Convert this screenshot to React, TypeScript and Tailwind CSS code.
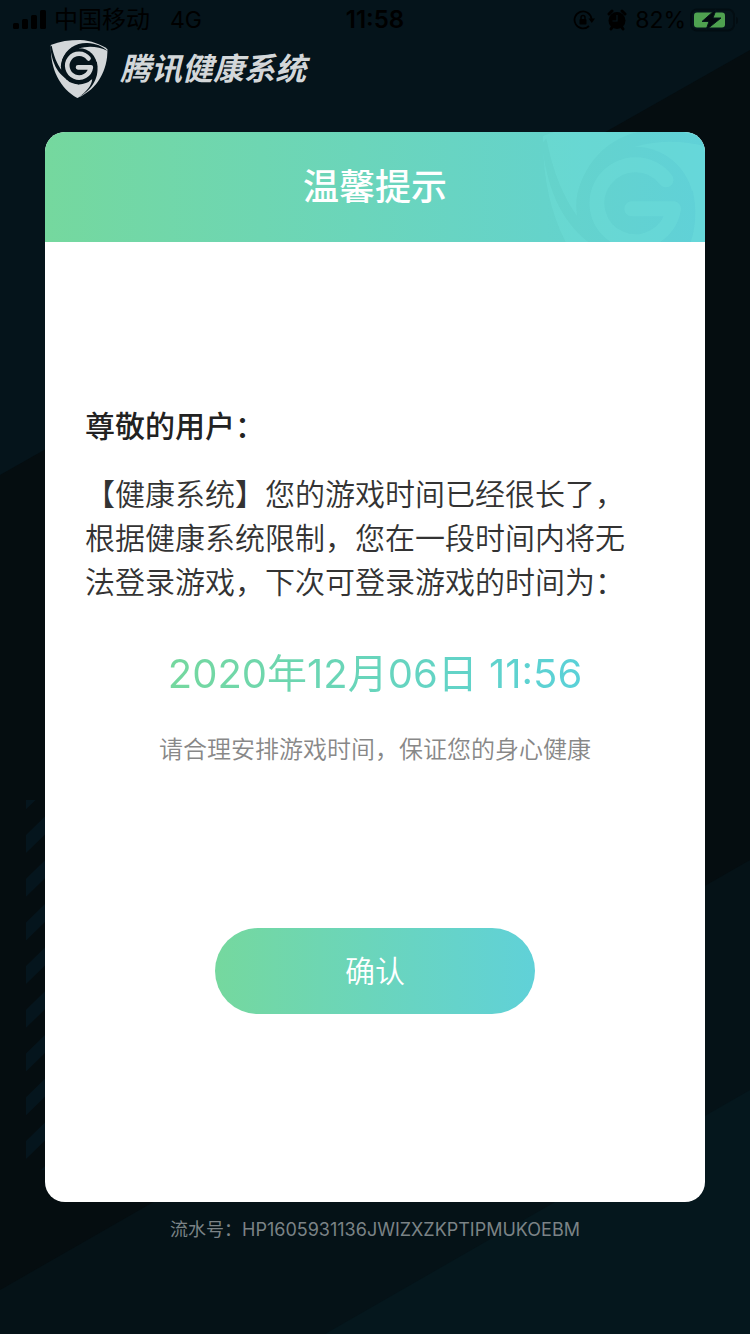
import { useId } from 'react';

const notice = {
    title: '温馨提示',
    greeting: '尊敬的用户：',
    message: '【健康系统】您的游戏时间已经很长了，根据健康系统限制，您在一段时间内将无法登录游戏，下次可登录游戏的时间为：',
    nextLogin: '2020年12月06日 11:56',
    hint: '请合理安排游戏时间，保证您的身心健康',
    serial: 'HP1605931136JWIZXZKPTIPMUKOEBM',
};

const stripes = [-1, 0, 1, 2, 3, 4, 5, 6, 7, 8];

const ShieldLogo = ({ className }: { className?: string }) => {
    const id = useId();

    return (
        <svg viewBox="0 0 174 176" className={className} aria-hidden="true">
            <mask id={id}>
                <path d="M1 15C28 4 58 0 90 0c34 2 62 12 84 28-1 62-28 120-92 148C28 146 0 88 1 15Z" fill="#fff" />
                <g fill="#000">
                    <circle cx="87" cy="80" r="55" />
                    <path d="M36 60C48 26 78 8 112 9c26 1 46 10 62 24-28-14-58-16-87-8v55Z" />
                    <path d="M0 22c6 58 30 98 87 113V80L33 90C20 72 10 48 4 17Z" />
                    <path d="M141 66c10 46-12 84-57 109 26-18 42-38 43-56L87 80Z" />
                </g>
                <path d="M116 56A36 36 0 1 0 123 83H84" fill="none" stroke="#fff" strokeWidth="14" strokeLinecap="round" strokeLinejoin="round" />
            </mask>
            <rect width="174" height="176" fill="currentColor" mask={`url(#${id})`} />
        </svg>
    );
};

const Backdrop = () => (
    <svg viewBox="0 0 750 1334" preserveAspectRatio="none" className="absolute inset-0 -z-10 h-full w-full" aria-hidden="true">
        <defs>
            <clipPath id="band">
                <rect x="26" y="800" width="40" height="370" />
            </clipPath>
        </defs>
        <path d="M0 0H750V50L0 475Z" fill="#05141b" />
        <path d="M750 860V1334H0V1290Z" fill="#051217" />
        <path d="M750 1090V1334H325Z" fill="#05171d" />
        <g clipPath="url(#band)" fill="#05151d">
            {stripes.map((n) => (
                <path key={n} d="M26 835l40-39v18l-40 39Z" transform={`translate(0 ${n * 43.7})`} />
            ))}
        </g>
    </svg>
);

const StatusBar = () => (
    <div className="flex h-10 items-center justify-between px-3 text-[23px] leading-10 text-black">
        <div className="flex flex-1 items-center">
            <svg viewBox="0 0 34 20" className="mr-2 h-5 w-[34px]" fill="currentColor" aria-hidden="true">
                <rect x="1" y="13" width="6" height="6" rx="1.5" />
                <rect x="10" y="9" width="6" height="10" rx="1.5" />
                <rect x="19" y="5" width="6" height="14" rx="1.5" />
                <rect x="28" y="0" width="6" height="19" rx="1.5" />
            </svg>
            <span className="text-2xl leading-10">中国移动</span>
            <span className="ml-5">4G</span>
        </div>
        <span className="text-2xl leading-10 font-semibold">11:58</span>
        <div className="flex flex-1 items-center justify-end">
            <svg viewBox="0 0 22 20" className="mr-3 h-5 w-[22px]" aria-hidden="true">
                <path d="M18.5 9A8.5 8.5 0 1 0 16 16" fill="none" stroke="currentColor" strokeWidth="1.8" />
                <path d="M15.5 8.5H22L18.8 13Z" fill="currentColor" />
                <rect x="6.5" y="9" width="7" height="5.5" rx="1" fill="currentColor" />
                <path d="M8 9V7.5a2 2 0 0 1 4 0V9" fill="none" stroke="currentColor" strokeWidth="1.5" />
            </svg>
            <svg viewBox="0 0 20 22" className="mr-2 h-[22px] w-5" aria-hidden="true">
                <path d="M2 5 5 2M18 5l-3-3M4 20l2-3M16 20l-2-3" stroke="currentColor" strokeWidth="3" strokeLinecap="round" />
                <circle cx="10" cy="11.5" r="8.5" fill="currentColor" />
                <path d="M10 6v6H5.5" fill="none" stroke="#05141c" strokeWidth="1.2" />
            </svg>
            <span>82%</span>
            <svg viewBox="0 0 48 24" className="ml-1 h-6 w-12" aria-hidden="true">
                <rect x="1" y="1.5" width="43" height="21" rx="6" fill="none" stroke="#030d12" strokeWidth="2" />
                <path d="M46 9c3 1 3 6 0 7Z" fill="#030d12" />
                <rect x="4" y="4.5" width="31" height="15" rx="3" fill="#4fa150" />
                <path d="M25 2 12 13.5h7L16 22 31 10h-8l3-8Z" fill="#020a0e" stroke="#05141c" />
            </svg>
        </div>
    </div>
);

const App = () => {
    return (
        <div className="relative isolate flex min-h-screen flex-col bg-[#050d10] font-['Inter','Noto_Sans_CJK_SC',sans-serif]">
            <Backdrop />
            <StatusBar />
            <header className="flex h-[58px] items-center gap-3 px-[50px] text-[#d3d7d9]">
                <ShieldLogo className="h-[58px] w-[58px]" />
                <span className="text-[31px] leading-[58px] font-bold italic">腾讯健康系统</span>
            </header>
            <main className="mx-[45px] mt-[34px] overflow-hidden rounded-[20px] bg-white">
                <div className="relative overflow-hidden bg-linear-to-r from-[#75d89e] to-[#60d1d8]">
                    <ShieldLogo className="absolute -top-3 -right-[23px] w-[186px] text-[#75e4de]/30" />
                    <h1 className="relative text-center text-4xl leading-[110px] font-medium text-white">{notice.title}</h1>
                </div>
                <div className="flex flex-col px-10 pt-[162px] pb-[188px]">
                    <h2 className="text-[30px] leading-[44px] font-medium text-[#222]">{notice.greeting}</h2>
                    <p className="mt-6 max-w-[560px] text-[30px] leading-[44px] font-[350] text-[#333]">{notice.message}</p>
                    <time
                        dateTime="2020-12-06T11:56"
                        className="mt-10 self-center bg-linear-to-r from-[#75d89e] to-[#5ad1d8] bg-clip-text text-[40px] leading-[60px] text-transparent"
                    >
                        {notice.nextLogin}
                    </time>
                    <p className="mt-7 text-center text-2xl leading-9 font-[350] text-[#888]">{notice.hint}</p>
                    <button
                        type="button"
                        className="mt-40 h-[86px] w-80 self-center rounded-full bg-linear-to-r from-[#75d89e] to-[#60d1d8] text-[30px] font-[350] text-white"
                    >
                        确认
                    </button>
                </div>
            </main>
            <footer className="mt-3 text-center text-lg leading-8 text-[#7b8386]">流水号：{notice.serial}</footer>
        </div>
    );
};

export default App;
